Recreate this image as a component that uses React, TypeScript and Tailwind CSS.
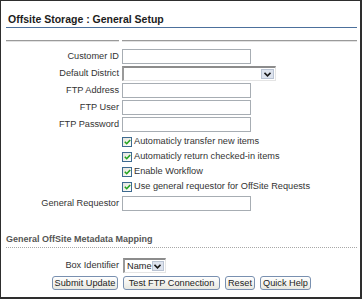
import React from "react";

const FIELDS_TOP = ["Customer ID", "Default District", "FTP Address", "FTP User", "FTP Password"];

const CHECKS = [
    "Automaticly transfer new items",
    "Automaticly return checked-in items",
    "Enable Workflow",
    "Use general requestor for OffSite Requests",
];

function TextBox() {
    return <div className="h-[15px] w-[129px] border border-[#a7adb3] bg-white" />;
}

function Arrow() {
    return (
        <div className="flex h-full w-[13px] items-center justify-center border border-[#b9c3d3] bg-[#dde3ee]">
            <svg width="7" height="5" viewBox="0 0 7 5">
                <path d="M0.5 0.8 L3.5 3.8 L6.5 0.8" fill="none" stroke="#1a1a1a" strokeWidth="1.6" />
            </svg>
        </div>
    );
}

function Select({ width, value }: { width: string; value?: string }) {
    return (
        <div className={`flex h-[15px] ${width} items-stretch border-t-2 border-l-2 border-t-[#8c8c8c] border-l-[#9a9a9a] border-b border-r border-b-[#e4e4e4] border-r-[#e4e4e4] bg-white pr-[1px] py-[1px]`}>
            <div className="flex-1 pl-[2px] leading-[11px] text-[#222]">{value}</div>
            <Arrow />
        </div>
    );
}

function Check({ label }: { label: string }) {
    return (
        <div className="flex h-[15px] items-center gap-[2px]">
            <div className="flex h-[10px] w-[10px] items-center justify-center border border-[#3d6a8f] bg-gradient-to-br from-[#e4e4dc] to-white">
                <svg width="7" height="6" viewBox="0 0 7 6">
                    <path d="M0.8 2.8 L2.7 4.7 L6.2 1" fill="none" stroke="#22a31e" strokeWidth="1.6" />
                </svg>
            </div>
            <span className="text-[#333]">{label}</span>
        </div>
    );
}

function Btn({ label, width }: { label: string; width: string }) {
    return (
        <button className={`h-[14px] ${width} rounded-[3px] border border-[#7990b0] bg-gradient-to-b from-white to-[#e8e8e0] text-center leading-[12px] text-[#222]`}>
            {label}
        </button>
    );
}

export default function App() {
    return (
        <div className="h-[299px] w-[362px] overflow-hidden border-t border-l border-r-2 border-b-2 border-[#2e2e2e] bg-white pl-[5px] pr-[3px] font-['Liberation_Sans',Arial,sans-serif] text-[9.2px]">
            {/* Header */}
            <div className="border-b border-[#4c709c] px-[2px] pt-[12px] pb-[2px]">
                <div className="text-[10.5px] font-bold leading-[12px] text-[#1c1c1c]">Offsite Storage : General Setup</div>
            </div>

            <div className="mt-[12px] flex gap-[3px]">
                <div className="h-[2px] w-[113px] border-t border-b border-t-[#9a9a9a] border-b-[#e2e2e2]" />
                <div className="h-[2px] flex-1 border-t border-b border-t-[#9a9a9a] border-b-[#e2e2e2]" />
            </div>

            {/* Form */}
            <div className="mt-[7px] grid grid-cols-[113px_1fr] items-center gap-x-[3px] gap-y-[2px] leading-[11px]">
                {FIELDS_TOP.map((f) => (
                    <React.Fragment key={f}>
                        <div className="text-right text-[#333]">{f}</div>
                        {f === "Default District" ? <Select width="w-[154px]" /> : <TextBox />}
                    </React.Fragment>
                ))}
                <div />
                <div className="flex flex-col">
                    {CHECKS.map((c) => (
                        <Check key={c} label={c} />
                    ))}
                </div>
                <div className="text-right text-[#333]">General Requestor</div>
                <TextBox />
            </div>

            {/* Mapping section */}
            <div className="mt-[23px] border-b border-dotted border-[#a8a8a8] pb-[2px]">
                <div className="text-[9px] font-bold leading-[11px] text-[#555]">General OffSite Metadata Mapping</div>
            </div>

            <div className="mt-[10px] grid grid-cols-[113px_1fr] items-center gap-x-[4px] leading-[11px]">
                <div className="text-right text-[#333]">Box Identifier</div>
                <Select width="w-[43px]" value="Name" />
            </div>

            <div className="mt-[3px] flex justify-center gap-[5px]">
                <Btn label="Submit Update" width="w-[66px]" />
                <Btn label="Test FTP Connection" width="w-[97px]" />
                <Btn label="Reset" width="w-[30px]" />
                <Btn label="Quick Help" width="w-[51px]" />
            </div>
        </div>
    );
}
